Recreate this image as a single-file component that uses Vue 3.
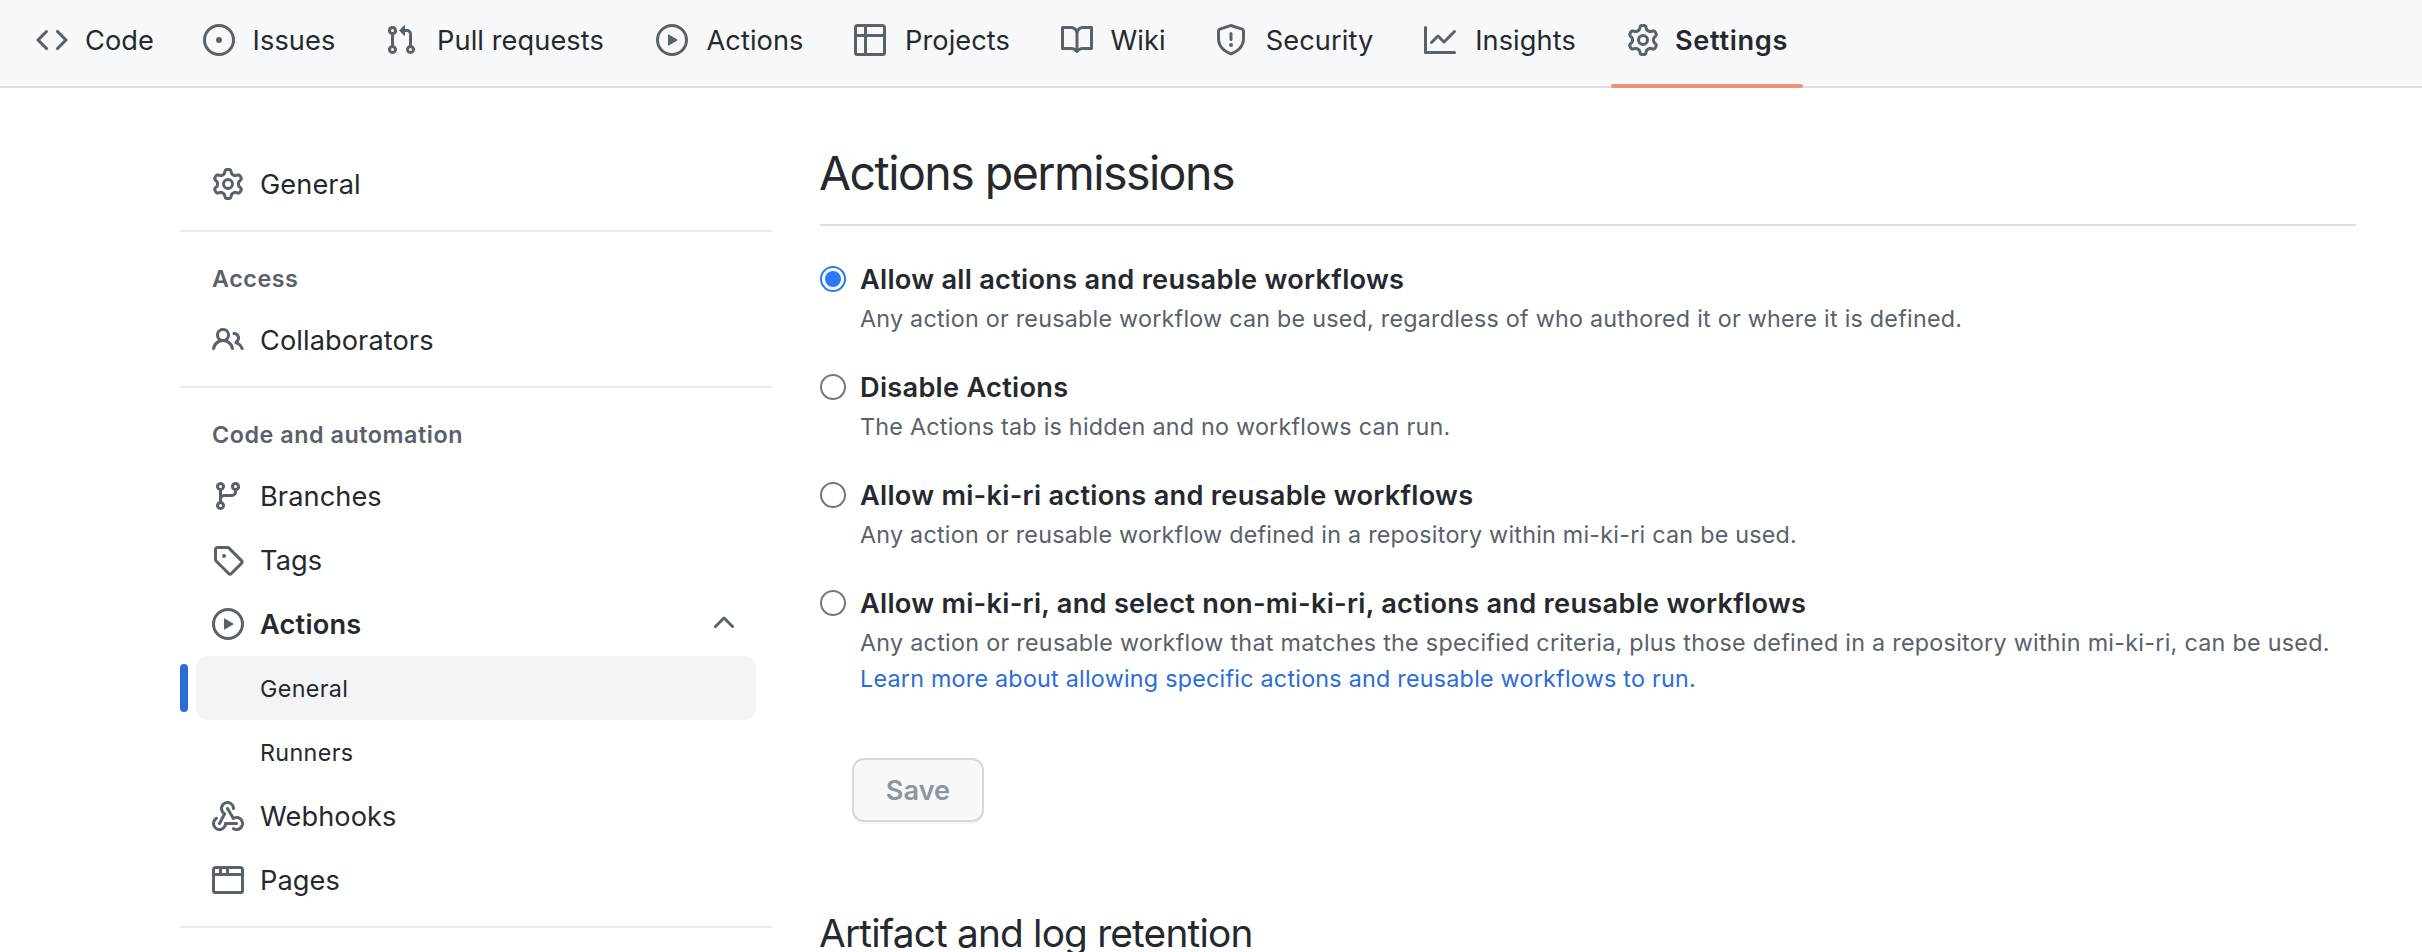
<script setup>
import { h } from 'vue'

const paths = {
  code: 'M4.72 3.22a.75.75 0 011.06 1.06L2.06 8l3.72 3.72a.75.75 0 11-1.06 1.06L.47 8.53a.75.75 0 010-1.06l4.25-4.25zm6.56 0a.75.75 0 10-1.06 1.06L13.94 8l-3.72 3.72a.75.75 0 101.06 1.06l4.25-4.25a.75.75 0 000-1.06l-4.25-4.25z',
  issue: 'M8 9.5a1.5 1.5 0 100-3 1.5 1.5 0 000 3zM8 0a8 8 0 100 16A8 8 0 008 0zM1.5 8a6.5 6.5 0 1113 0 6.5 6.5 0 01-13 0z',
  pull: 'M7.177 3.073L9.573.677A.25.25 0 0110 .854v4.792a.25.25 0 01-.427.177L7.177 3.427a.25.25 0 010-.354zM3.75 2.5a.75.75 0 100 1.5.75.75 0 000-1.5zm-2.25.75a2.25 2.25 0 113 2.122v5.256a2.251 2.251 0 11-1.5 0V5.372A2.25 2.25 0 011.5 3.25zM11 2.5h-1V4h1a1 1 0 011 1v5.628a2.251 2.251 0 101.5 0V5A2.5 2.5 0 0011 2.5zm1 10.25a.75.75 0 111.5 0 .75.75 0 01-1.5 0zM3.75 12a.75.75 0 100 1.5.75.75 0 000-1.5z',
  play: 'M1.5 8a6.5 6.5 0 1113 0 6.5 6.5 0 01-13 0zM8 0a8 8 0 100 16A8 8 0 008 0zM6.379 5.227A.25.25 0 006 5.442v5.117a.25.25 0 00.379.214l4.264-2.559a.25.25 0 000-.428L6.379 5.227z',
  table: 'M0 1.75C0 .784.784 0 1.75 0h12.5C15.216 0 16 .784 16 1.75v12.5A1.75 1.75 0 0114.25 16H1.75A1.75 1.75 0 010 14.25V1.75zM1.5 6.5v7.75c0 .138.112.25.25.25H5v-8H1.5zM5 5H1.5V1.75a.25.25 0 01.25-.25H5V5zm1.5 1.5v8h7.75a.25.25 0 00.25-.25V6.5h-8zm8-1.5h-8V1.5h7.75a.25.25 0 01.25.25V5z',
  book: 'M0 1.75A.75.75 0 01.75 1h4.253c1.227 0 2.317.59 3 1.501A3.744 3.744 0 0111.006 1h4.245a.75.75 0 01.75.75v10.5a.75.75 0 01-.75.75h-4.507a2.25 2.25 0 00-1.591.659l-.622.621a.75.75 0 01-1.06 0l-.622-.621A2.25 2.25 0 005.258 13H.75a.75.75 0 01-.75-.75V1.75zm8.755 3a2.25 2.25 0 012.25-2.25H14.5v9h-3.757c-.71 0-1.4.201-1.992.572l.004-7.322zm-1.504 7.324l.004-5.073-.002-2.253A2.25 2.25 0 005.003 2.5H1.5v9h3.757a3.75 3.75 0 011.994.574z',
  shield: 'M7.467.133a1.75 1.75 0 011.066 0l5.25 1.68A1.75 1.75 0 0115 3.48V7c0 1.566-.32 3.182-1.303 4.682-.983 1.498-2.585 2.813-5.032 3.855a1.7 1.7 0 01-1.33 0c-2.447-1.042-4.049-2.357-5.032-3.855C1.32 10.182 1 8.566 1 7V3.48a1.75 1.75 0 011.217-1.667l5.25-1.68zm.61 1.429a.25.25 0 00-.153 0l-5.25 1.68a.25.25 0 00-.174.238V7c0 1.358.275 2.666 1.057 3.86.784 1.194 2.121 2.34 4.366 3.297a.2.2 0 00.154 0c2.245-.956 3.582-2.104 4.366-3.298C13.225 9.666 13.5 8.36 13.5 7V3.48a.25.25 0 00-.174-.237l-5.25-1.68zM9 10.5a1 1 0 11-2 0 1 1 0 012 0zm-.25-5.75a.75.75 0 10-1.5 0v3a.75.75 0 001.5 0v-3z',
  graph: 'M1.5 1.75a.75.75 0 00-1.5 0v12.5c0 .414.336.75.75.75h14.5a.75.75 0 000-1.5H1.5V1.75zm14.28 2.53a.75.75 0 00-1.06-1.06L10 7.94 7.53 5.47a.75.75 0 00-1.06 0L3.22 8.72a.75.75 0 001.06 1.06L7 7.06l2.47 2.47a.75.75 0 001.06 0l5.25-5.25z',
  gear: 'M8 0a8.2 8.2 0 0 1 .701.031C9.444.095 9.99.645 10.16 1.29l.288 1.107c.018.066.079.158.212.224.231.114.454.243.668.386.123.082.233.09.299.071l1.103-.303c.644-.176 1.392.021 1.82.63.27.385.506.792.704 1.218.315.675.111 1.422-.364 1.891l-.814.806c-.049.048-.098.147-.088.294.016.257.016.515 0 .772-.01.147.038.246.088.294l.814.806c.475.469.679 1.216.364 1.891a7.977 7.977 0 0 1-.704 1.217c-.428.61-1.176.807-1.82.63l-1.102-.302c-.067-.019-.177-.011-.3.071a5.909 5.909 0 0 1-.668.386c-.133.066-.194.158-.211.224l-.29 1.106c-.168.646-.715 1.196-1.458 1.26a8.006 8.006 0 0 1-1.402 0c-.743-.064-1.289-.614-1.458-1.26l-.289-1.106c-.018-.066-.079-.158-.212-.224a5.738 5.738 0 0 1-.668-.386c-.123-.082-.233-.09-.299-.071l-1.103.303c-.644.176-1.392-.021-1.82-.63a8.12 8.12 0 0 1-.704-1.218c-.315-.675-.111-1.422.363-1.891l.815-.806c.05-.048.098-.147.088-.294a6.214 6.214 0 0 1 0-.772c.01-.147-.038-.246-.088-.294l-.815-.806C.635 6.045.431 5.298.746 4.623a7.92 7.92 0 0 1 .704-1.217c.428-.61 1.176-.807 1.82-.63l1.102.302c.067.019.177.011.3-.071.214-.143.437-.272.668-.386.133-.066.194-.158.211-.224l.29-1.106C6.009.645 6.556.095 7.299.03 7.53.01 7.764 0 8 0Zm-.571 1.525c-.036.003-.108.036-.137.146l-.289 1.105c-.147.561-.549.967-.998 1.189-.173.086-.34.183-.5.29-.417.278-.97.423-1.529.27l-1.103-.303c-.109-.03-.175.016-.195.045-.22.312-.412.644-.573.99-.014.031-.021.11.059.19l.815.806c.411.406.562.957.53 1.456a4.709 4.709 0 0 0 0 .582c.032.499-.119 1.05-.53 1.456l-.815.806c-.081.08-.073.159-.059.19.162.346.353.677.573.989.02.03.085.076.195.046l1.102-.303c.56-.153 1.113-.008 1.53.27.161.107.328.204.501.29.447.222.85.629.997 1.189l.289 1.105c.029.109.101.143.137.146a6.6 6.6 0 0 0 1.142 0c.036-.003.108-.036.137-.146l.289-1.105c.147-.561.549-.967.998-1.189.173-.086.34-.183.5-.29.417-.278.97-.423 1.529-.27l1.103.303c.109.029.175-.016.195-.045.22-.313.411-.644.573-.99.014-.031.021-.11-.059-.19l-.815-.806c-.411-.406-.562-.957-.53-1.456a4.709 4.709 0 0 0 0-.582c-.032-.499.119-1.05.53-1.456l.815-.806c.081-.08.073-.159.059-.19a6.464 6.464 0 0 0-.573-.989c-.02-.03-.085-.076-.195-.046l-1.102.303c-.56.153-1.113.008-1.53-.27a4.44 4.44 0 0 0-.501-.29c-.447-.222-.85-.629-.997-1.189l-.289-1.105c-.029-.11-.101-.143-.137-.146a6.6 6.6 0 0 0-1.142 0ZM11 8a3 3 0 1 1-6 0 3 3 0 0 1 6 0ZM9.5 8a1.5 1.5 0 1 0-3.001.001A1.5 1.5 0 0 0 9.5 8Z',
  people: 'M5.5 3.5a2 2 0 100 4 2 2 0 000-4zM2 5.5a3.5 3.5 0 115.898 2.549 5.507 5.507 0 013.034 4.084.75.75 0 11-1.482.235 4.001 4.001 0 00-7.9 0 .75.75 0 01-1.482-.236A5.507 5.507 0 013.102 8.05 3.49 3.49 0 012 5.5zM11 4a.75.75 0 100 1.5 1.5 1.5 0 01.666 2.844.75.75 0 00-.416.672v.352a.75.75 0 00.574.73c1.2.289 2.162 1.2 2.522 2.372a.75.75 0 101.434-.44 5.01 5.01 0 00-2.56-3.012A3 3 0 0011 4z',
  branch: 'M11.75 2.5a.75.75 0 100 1.5.75.75 0 000-1.5zm-2.25.75a2.25 2.25 0 113 2.122V6A2.5 2.5 0 0110 8.5H6a1 1 0 00-1 1v1.128a2.251 2.251 0 11-1.5 0V5.372a2.25 2.25 0 111.5 0v1.836A2.492 2.492 0 016 7h4a1 1 0 001-1v-.628A2.25 2.25 0 019.5 3.25zM4.25 12a.75.75 0 100 1.5.75.75 0 000-1.5zM3.5 3.25a.75.75 0 111.5 0 .75.75 0 01-1.5 0z',
  tag: 'M1 7.775V2.75C1 1.784 1.784 1 2.75 1h5.025c.464 0 .91.184 1.238.513l6.25 6.25a1.75 1.75 0 0 1 0 2.474l-5.026 5.026a1.75 1.75 0 0 1-2.474 0l-6.25-6.25A1.752 1.752 0 0 1 1 7.775Zm1.5 0c0 .066.026.13.073.177l6.25 6.25a.25.25 0 0 0 .354 0l5.025-5.025a.25.25 0 0 0 0-.354l-6.25-6.25a.25.25 0 0 0-.177-.073H2.75a.25.25 0 0 0-.25.25ZM6 5a1 1 0 1 1 0 2 1 1 0 0 1 0-2Z',
  webhook: ['M5.5 4.25a2.25 2.25 0 014.5 0 .75.75 0 001.5 0 3.75 3.75 0 10-6.14 2.889l-2.272 4.258a.75.75 0 001.324.706L7 7.25a.75.75 0 00-.309-1.015A2.25 2.25 0 015.5 4.25z', 'M7.364 3.607a.75.75 0 011.03.257l2.608 4.349a3.75 3.75 0 11-.628 6.785.75.75 0 01.752-1.299 2.25 2.25 0 10-.033-3.88.75.75 0 01-1.03-.256L7.107 4.636a.75.75 0 01.257-1.03z', 'M2.9 8.776A.75.75 0 012.625 9.8 2.25 2.25 0 106 11.75a.75.75 0 01.75-.751h5.5a.75.75 0 010 1.5H7.425a3.751 3.751 0 11-5.55-3.998.75.75 0 011.024.274z'],
  browser: 'M0 2.75C0 1.784.784 1 1.75 1h12.5c.966 0 1.75.784 1.75 1.75v10.5A1.75 1.75 0 0114.25 15H1.75A1.75 1.75 0 010 13.25V2.75zm1.75-.25a.25.25 0 00-.25.25V4.5h2v-2H1.75zM5 2.5v2h2v-2H5zm3.5 0v2h6V2.75a.25.25 0 00-.25-.25H8.5zm6 3.5h-13v7.25c0 .138.112.25.25.25h12.5a.25.25 0 00.25-.25V6z',
  chevronUp: 'M3.22 9.78a.75.75 0 010-1.06l4.25-4.25a.75.75 0 011.06 0l4.25 4.25a.75.75 0 01-1.06 1.06L8 6.06 4.28 9.78a.75.75 0 01-1.06 0z',
}

const Icon = ({ name }) =>
  h(
    'svg',
    { viewBox: '0 0 16 16', width: 32, height: 32, fill: 'currentColor', 'aria-hidden': 'true' },
    [].concat(paths[name]).map((d) => h('path', { d, 'fill-rule': 'evenodd' })),
  )
Icon.props = ['name']

const tabs = [
  { label: 'Code', icon: 'code', width: 71 },
  { label: 'Issues', icon: 'issue', width: 86 },
  { label: 'Pull requests', icon: 'pull', width: 175 },
  { label: 'Actions', icon: 'play', width: 102 },
  { label: 'Projects', icon: 'table', width: 111 },
  { label: 'Wiki', icon: 'book', width: 58 },
  { label: 'Security', icon: 'shield', width: 113 },
  { label: 'Insights', icon: 'graph', width: 107 },
  { label: 'Settings', icon: 'gear', width: 112, active: true },
]

const groups = [
  { items: [{ label: 'General', icon: 'gear' }] },
  { title: 'Access', items: [{ label: 'Collaborators', icon: 'people' }] },
  {
    title: 'Code and automation',
    items: [
      { label: 'Branches', icon: 'branch' },
      { label: 'Tags', icon: 'tag' },
      { label: 'Actions', icon: 'play', open: true },
      { label: 'General', sub: true, current: true },
      { label: 'Runners', sub: true },
      { label: 'Webhooks', icon: 'webhook' },
      { label: 'Pages', icon: 'browser' },
    ],
  },
]

const options = [
  {
    title: 'Allow all actions and reusable workflows',
    text: 'Any action or reusable workflow can be used, regardless of who authored it or where it is defined.',
    checked: true,
  },
  { title: 'Disable Actions', text: 'The Actions tab is hidden and no workflows can run.' },
  {
    title: 'Allow mi-ki-ri actions and reusable workflows',
    text: 'Any action or reusable workflow defined in a repository within mi-ki-ri can be used.',
  },
  {
    title: 'Allow mi-ki-ri, and select non-mi-ki-ri, actions and reusable workflows',
    text: 'Any action or reusable workflow that matches the specified criteria, plus those defined in a repository within mi-ki-ri, can be used.',
    link: 'Learn more about allowing specific actions and reusable workflows to run.',
  },
]
</script>

<template>
  <div class="page">
    <nav class="tabs">
      <a v-for="t in tabs" :key="t.label" class="tab" :class="{ active: t.active }">
        <Icon :name="t.icon" />
        <span class="tab-label" :style="{ width: t.width + 'px' }">{{ t.label }}</span>
      </a>
    </nav>

    <div class="layout">
      <aside class="sidebar">
        <section v-for="(g, i) in groups" :key="i" class="group">
          <h3 v-if="g.title" class="group-title">{{ g.title }}</h3>
          <a
            v-for="item in g.items"
            :key="item.label + item.icon"
            class="item"
            :class="{ sub: item.sub, current: item.current, open: item.open }"
          >
            <Icon v-if="item.icon" :name="item.icon" />
            <span class="item-label">{{ item.label }}</span>
            <Icon v-if="item.open" name="chevronUp" />
          </a>
        </section>
      </aside>

      <main class="main">
        <h1 class="heading">Actions permissions</h1>
        <div class="options">
          <label v-for="o in options" :key="o.title" class="option">
            <span class="radio" :class="{ checked: o.checked }"></span>
            <span class="option-body">
              <strong class="option-title">{{ o.title }}</strong>
              <span class="option-text" :class="{ long: o.link }">{{ o.text }}</span>
              <a v-if="o.link" class="option-text link">{{ o.link }}</a>
            </span>
          </label>
        </div>
        <button class="save" disabled>Save</button>
        <h2 class="subheading">Artifact and log retention</h2>
      </main>
    </div>
  </div>
</template>

<style>
body {
  overflow: hidden;
  background: #fff;
}
</style>

<style scoped>
.page {
  height: 952px;
  overflow: hidden;
  background: #fff;
  color: #25292e;
  font-family: Inter, 'Liberation Sans', sans-serif;
  font-size: 27.2px;
  letter-spacing: 0.08px;
}

svg {
  display: block;
  flex: none;
  color: #59616a;
}

.tabs {
  box-sizing: border-box;
  display: flex;
  gap: 16px;
  height: 88px;
  padding-left: 20px;
  background: #f7f8fa;
  border-bottom: 2px solid #d9dee3;
}

.tab {
  position: relative;
  display: flex;
  align-items: center;
  gap: 16px;
  height: 80px;
  padding: 0 16px;
}

.tab-label {
  text-align: center;
  white-space: nowrap;
}

.tab.active {
  font-weight: 600;
  letter-spacing: 0.65px;
}

.tab.active::after {
  content: '';
  position: absolute;
  left: 0;
  right: 0;
  bottom: -8px;
  height: 4px;
  border-radius: 2px;
  background: #f0907a;
}

.layout {
  display: grid;
  grid-template-columns: 592px 1536px;
  column-gap: 48px;
  padding-left: 180px;
}

.sidebar {
  padding-top: 64px;
}

.group {
  padding-bottom: 14px;
  border-bottom: 2px solid #e7ebee;
}

.group-title {
  margin: 0;
  padding: 30px 0 12px 32px;
  font-size: 23.3px;
  line-height: 34px;
  font-weight: 600;
  letter-spacing: 0.55px;
  color: #59616a;
}

.item {
  position: relative;
  box-sizing: border-box;
  display: flex;
  align-items: center;
  gap: 16px;
  height: 64px;
  margin: 0 16px;
  padding: 0 16px;
  border-radius: 12px;
}

.item-label {
  flex: 1;
}

.item.open {
  font-weight: 600;
  letter-spacing: 0.2px;
}

.item.sub {
  padding-left: 64px;
  font-size: 23.3px;
  letter-spacing: 0.35px;
}

.item.current {
  background: #f3f4f6;
}

.item.current::before {
  content: '';
  position: absolute;
  left: -16px;
  top: 8px;
  width: 8px;
  height: 48px;
  border-radius: 12px;
  background: #286cd5;
}

.main {
  padding-top: 50px;
}

.heading {
  box-sizing: border-box;
  height: 88px;
  margin: 0 0 32px;
  border-bottom: 2px solid #d9dee3;
  font-size: 46.5px;
  line-height: 70px;
  font-weight: 400;
  letter-spacing: -1.54px;
  text-indent: -1px;
}

.options {
  display: flex;
  flex-direction: column;
  gap: 29px;
}

.option {
  display: flex;
  gap: 14px;
}

.radio {
  box-sizing: border-box;
  flex: none;
  width: 26px;
  height: 26px;
  margin-top: 8px;
  border: 2px solid #767676;
  border-radius: 50%;
}

.radio.checked {
  padding: 3px;
  border-color: #2c79fb;
  background: #2c79fb content-box;
}

.option-body {
  display: flex;
  flex-direction: column;
  padding-top: 1px;
  white-space: nowrap;
}

.option-title {
  line-height: 42px;
  font-weight: 600;
  letter-spacing: 0.27px;
}

.option-text {
  font-size: 23.3px;
  line-height: 36px;
  letter-spacing: 0.24px;
  color: #59616a;
}

.option-text.long {
  letter-spacing: 0.28px;
}

.option-text.link {
  color: #2b6cd9;
}

.save {
  box-sizing: border-box;
  display: block;
  width: 132px;
  height: 64px;
  margin: 61px 0 0 32px;
  padding: 0;
  border: 2px solid #d5d8da;
  border-radius: 12px;
  background: #f7f8fa;
  box-shadow: 0 2px 0 rgba(27, 31, 36, 0.04);
  color: #8d959f;
  font: 600 27.2px Inter, 'Liberation Sans', sans-serif;
}

.subheading {
  margin: 81px 0 0;
  font-size: 38.8px;
  line-height: 60px;
  font-weight: 400;
  letter-spacing: -0.82px;
  text-indent: -1px;
}
</style>
